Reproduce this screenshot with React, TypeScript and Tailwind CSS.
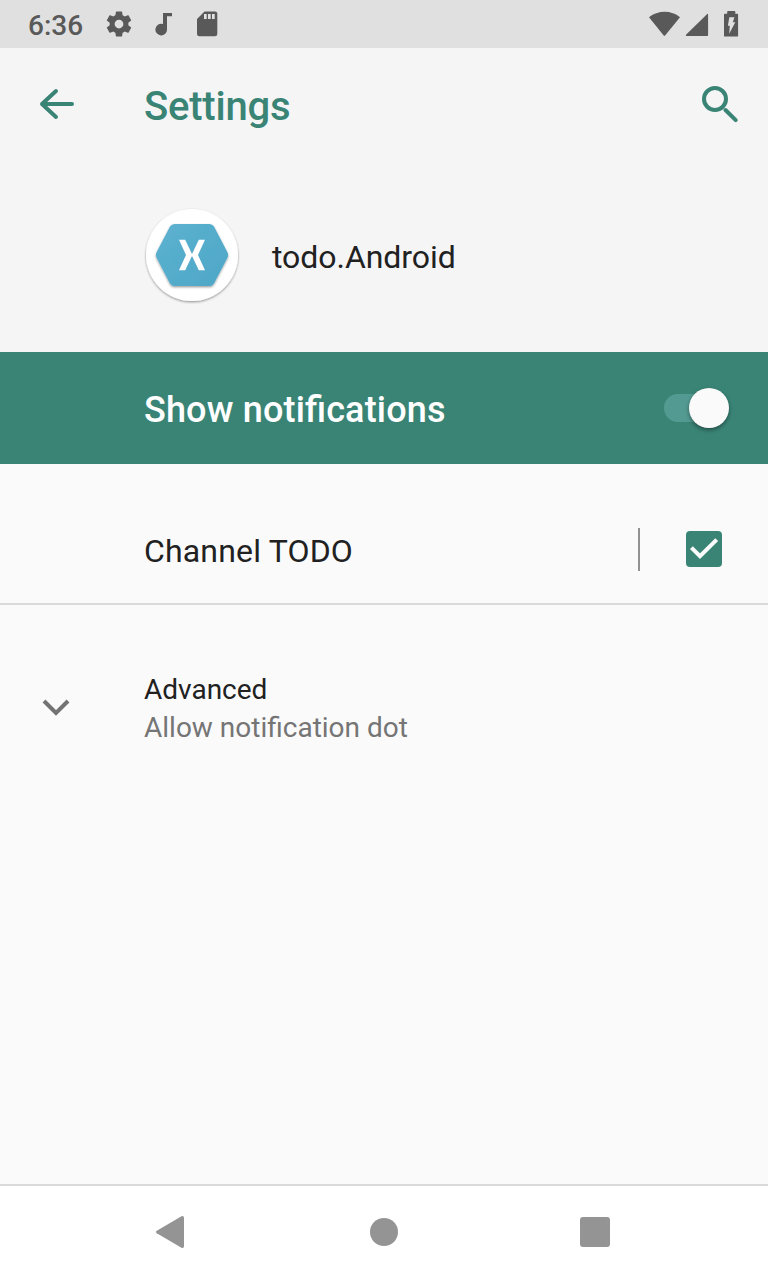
import React from "react";

function StatusBar() {
  return (
    <div className="flex h-12 shrink-0 items-start justify-between bg-[#e0e0e0] text-[#595959]">
      <div className="flex items-start">
        <span className="ml-7 mt-2.5 w-[76px] text-[28px] font-medium leading-8">6:36</span>
        <svg className="mt-[9px] h-[30px] w-[30px]" viewBox="0 0 24 24" fill="currentColor">
          <path d="M19.43 12.98c.04-.32.07-.64.07-.98s-.03-.66-.07-.98l2.11-1.65c.19-.15.24-.42.12-.64l-2-3.46c-.12-.22-.39-.3-.61-.22l-2.49 1c-.52-.4-1.08-.73-1.69-.98l-.38-2.65C14.46 2.18 14.25 2 14 2h-4c-.25 0-.46.18-.49.42l-.38 2.65c-.61.25-1.17.59-1.69.98l-2.49-1c-.23-.09-.49 0-.61.22l-2 3.46c-.13.22-.07.49.12.64l2.11 1.65c-.04.32-.07.65-.07.98s.03.66.07.98l-2.11 1.65c-.19.15-.24.42-.12.64l2 3.46c.12.22.39.3.61.22l2.49-1c.52.4 1.08.73 1.69.98l.38 2.65c.03.24.24.42.49.42h4c.25 0 .46-.18.49-.42l.38-2.65c.61-.25 1.17-.59 1.69-.98l2.49 1c.23.09.49 0 .61-.22l2-3.46c.12-.22.07-.49-.12-.64zM12 15.5a3.5 3.5 0 1 1 0-7 3.5 3.5 0 0 1 0 7z" />
        </svg>
        <svg className="ml-[21px] mt-3 h-6 w-[18px]" viewBox="0 0 18 24" fill="currentColor">
          <path d="M8 1h9v3.200h-5v13.200A5.800 5.800 0 1 1 8 12.100z" />
        </svg>
        <svg className="ml-6 mt-[11px] h-[26px] w-[21px]" viewBox="0 0 21 26" fill="currentColor">
          <path fillRule="evenodd" d="M7.500.5H18A2.300 2.300 0 0 1 20.300 3v20a2.300 2.300 0 0 1-2.300 2.300H2.300A2.300 2.300 0 0 1 0 23V8zM7 3v5h2.700V3zm4 0v5h2.700V3zm4 0v5h2.700V3z" />
        </svg>
      </div>
      <div className="mr-[29px] mt-[11px] flex items-start">
        <svg className="h-[26px] w-8" viewBox="0 0 32 26" fill="currentColor">
          <path d="M0 6.200C9-1.200 22.500-1.200 31 6.200L16.300 24.300q-.9 1-1.800 0z" />
        </svg>
        <svg className="ml-1 h-[26px] w-6" viewBox="0 0 24 26" fill="currentColor">
          <path d="M22.200 2.900a.7.700 0 0 1 .9.600V24a1 1 0 0 1-1 1H1.600a.7.700 0 0 1-.6-1.200z" />
        </svg>
        <svg className="ml-[15px] h-[26px] w-[15px]" viewBox="0 0 15 26">
          <path fill="currentColor" d="M4 0h6.500q.8 0 .8.800v1.900h1.900q.9 0 .9.900v21.100q0 .9-.9.900H.9q-.9 0-.9-.9V3.600q0-.9.9-.9H3.200V.8Q3.200 0 4 0z" />
          <path fill="#e0e0e0" d="M5.300 6.300h5.100l-1.600 5h2.500L5.200 22.800l.6-8H3.900z" />
        </svg>
      </div>
    </div>
  );
}

function Toolbar() {
  return (
    <header className="flex h-28 items-center text-[#3a8476]">
      <button aria-label="Back" className="ml-8 h-12 w-12">
        <svg viewBox="0 0 48 48" fill="none" stroke="currentColor" strokeWidth="4" strokeLinecap="round" strokeLinejoin="round">
          <path d="M40 24H10M24 11 10 24l14 13" />
        </svg>
      </button>
      <h1 className="ml-16 mt-1.5 flex-1 text-[40px] font-medium leading-[48px] tracking-[-0.2px]">Settings</h1>
      <button aria-label="Search" className="mr-6 h-12 w-12">
        <svg viewBox="0 0 48 48" fill="none" stroke="currentColor" strokeWidth="4">
          <circle cx="19" cy="19" r="11" />
          <path d="m29.500 30 10.200 10.200" strokeLinecap="round" />
        </svg>
      </button>
    </header>
  );
}

function AppIcon() {
  return (
    <svg className="h-24 w-24" viewBox="0 0 96 96">
      <defs>
        <linearGradient id="hex" x1="0" y1="0" x2="1" y2="1">
          <stop offset="0" stopColor="#5fb2d0" />
          <stop offset="0.4" stopColor="#55adcc" />
          <stop offset="1" stopColor="#4fa7c7" />
        </linearGradient>
        <filter id="shadow" x="-20%" y="-20%" width="140%" height="140%">
          <feDropShadow dx="0" dy="1.2" stdDeviation="0.8" floodColor="#000" floodOpacity="0.4" />
        </filter>
      </defs>
      <circle cx="48" cy="47" r="46" fill="#fff" filter="url(#shadow)" />
      <path d="M30.500 16h35q3 0 4.500 2.500L83.300 44q1.600 3 0 6L70 75.500q-1.500 2.500-4.500 2.500h-35q-3 0-4.500-2.500L12.700 50q-1.600-3 0-6L26 18.500Q27.500 16 30.500 16z" fill="url(#hex)" filter="url(#shadow)" />
      <path d="M35 31.700h6.200L47.700 45.500h.6L54.800 31.700H61L54 47l7 15.300h-6.200L48.300 48.500h-.6L41.200 62.300H35L42 47z" fill="#fff" />
    </svg>
  );
}

export default function App() {
  return (
    <div className="flex h-[1280px] w-[768px] flex-col overflow-hidden bg-[#fafafa] font-['Roboto',sans-serif] text-[#212121]">
      <StatusBar />
      <div className="h-[304px] shrink-0 bg-[#f5f5f5]">
        <Toolbar />
        <div className="flex h-48 items-center pl-36">
          <AppIcon />
          <span className="ml-8 mt-0.5 text-[32px] leading-10 tracking-[-0.05px]">todo.Android</span>
        </div>
      </div>
      <section className="flex h-28 shrink-0 items-center justify-between bg-[#3a8476] pl-36 pr-[39px] text-white">
        <span className="mt-1 text-[36px] font-medium leading-[44px] tracking-[0.16px] [font-feature-settings:'liga']">Show notifications</span>
        <button role="switch" aria-checked="true" aria-label="Show notifications" className="flex h-7 w-[65px] items-center justify-end">
          <span className="h-7 w-[45px] rounded-l-full bg-[#539b92]" />
          <span className="-ml-5 h-10 w-10 shrink-0 rounded-full bg-[#fafafa] shadow-[0_2px_4px_rgba(0,0,0,0.4)]" />
        </button>
      </section>
      <section className="flex h-[141px] shrink-0 items-center border-b-2 border-[#dadada] pl-36 pr-[46px] pt-8">
        <span className="mt-0.5 flex-1 text-[32px] leading-10 tracking-[0.17px]">Channel TODO</span>
        <span className="mr-[46px] h-[43px] w-0.5 bg-[#929292]" />
        <svg className="mb-px h-9 w-9" viewBox="0 0 36 36" role="img" aria-label="Enabled">
          <rect width="36" height="36" rx="4" fill="#3a8476" />
          <path d="m5.400 16.600 8.600 8.600L30.700 8.600" fill="none" stroke="#fafafa" strokeWidth="4" />
        </svg>
      </section>
      <section className="flex h-[204px] shrink-0 items-center">
        <svg className="ml-8 h-12 w-12 text-[#737373]" viewBox="0 0 48 48" fill="none" stroke="currentColor" strokeWidth="4">
          <path d="m12 18 12 12 12-12" />
        </svg>
        <div className="ml-16 mt-1 flex flex-col text-[28px] leading-[38px]">
          <span>Advanced</span>
          <span className="text-[#757575]">Allow notification dot</span>
        </div>
      </section>
      <nav className="mt-auto flex h-24 shrink-0 items-center border-t-2 border-[#dadada] bg-white pb-0.5 text-[#949494]">
        <svg className="ml-[155px] h-8 w-[30px]" viewBox="0 0 30 32" fill="currentColor">
          <path d="M26.500.3Q29-.5 29 2v28q0 2.500-2.500 1.700L1.800 17.200q-1.700-1.200 0-2.400z" />
        </svg>
        <span className="ml-[185px] h-7 w-7 rounded-full bg-current" />
        <span className="ml-[182px] h-[30px] w-[30px] rounded-[3px] bg-current" />
      </nav>
    </div>
  );
}
